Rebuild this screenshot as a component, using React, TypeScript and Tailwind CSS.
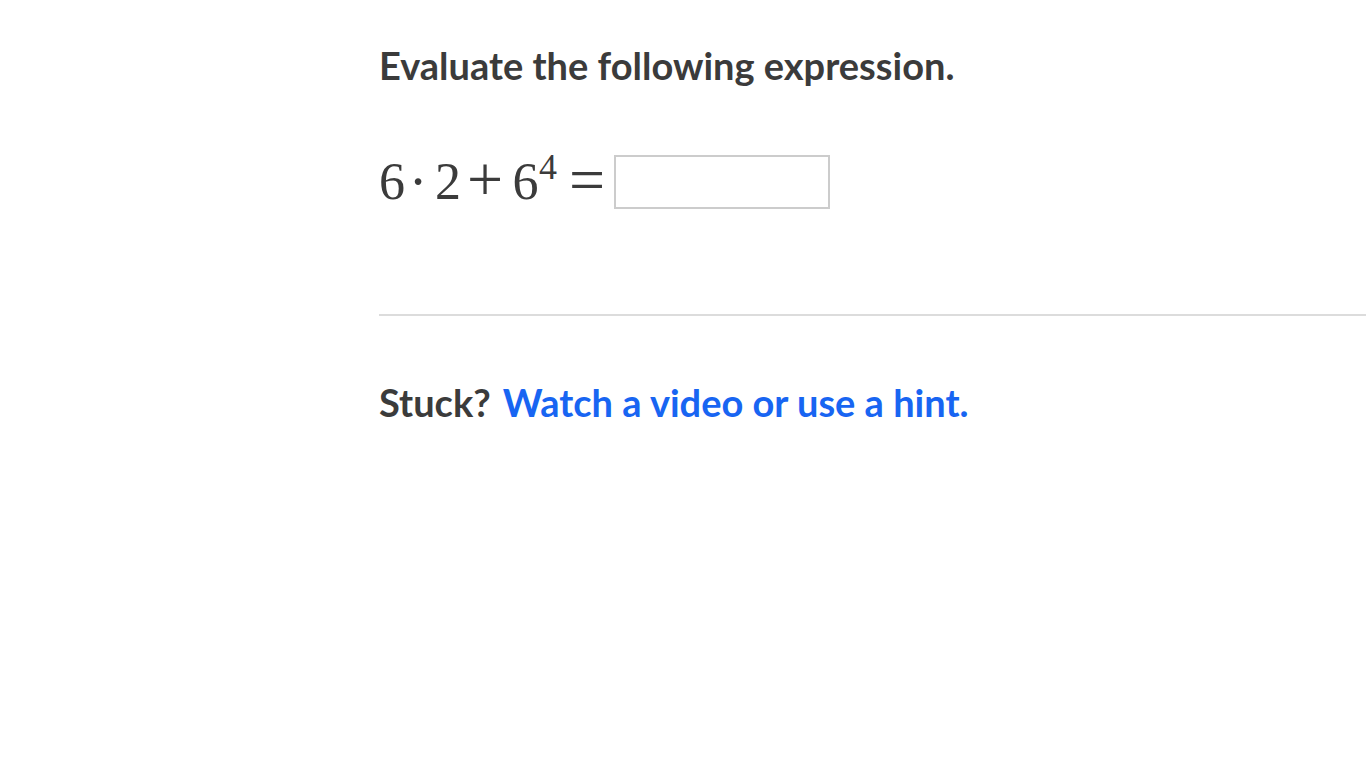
export default function App() {
  return (
    <div className="min-h-[768px] w-[1366px] bg-white pl-[379px] pt-[40px] text-[#3b3b3b]" style={{ fontFamily: "Lato, 'Noto Sans', sans-serif" }}>
      <h1 className="text-[38px] font-bold leading-[50px]">Evaluate the following expression.</h1>
      <div className="mt-[65px] flex items-center h-[54px]" style={{ fontFamily: "'Liberation Serif', 'DejaVu Serif', serif" }}>
        <span className="w-[22px] text-center text-[52px] leading-none">6</span>
        <span className="w-[34px] text-center text-[56px] leading-none">·</span>
        <span className="w-[23px] text-center text-[52px] leading-none">2</span>
        <span className="w-[54px] text-center text-[64px] leading-none -mt-[4px]">+</span>
        <span className="w-[27px] text-center text-[52px] leading-none">6</span>
        <span className="w-[12px] self-start -mt-[6px] text-center text-[36px] leading-none">4</span>
        <span className="ml-[18px] w-[34px] text-center text-[64px] leading-none -mt-[4px]">=</span>
        <div className="ml-[11px] h-[54px] w-[216px] border-2 border-[#cccccc] bg-white" />
      </div>
      <div className="mt-[105px] h-[2px] w-full bg-[#dcdcdc]" />
      <div className="mt-[61px] flex text-[38px] font-bold leading-[50px]">
        <span>Stuck?</span>
        <a className="ml-[12px] text-[#1865f2]" href="#">Watch a video or use a hint.</a>
      </div>
    </div>
  );
}
